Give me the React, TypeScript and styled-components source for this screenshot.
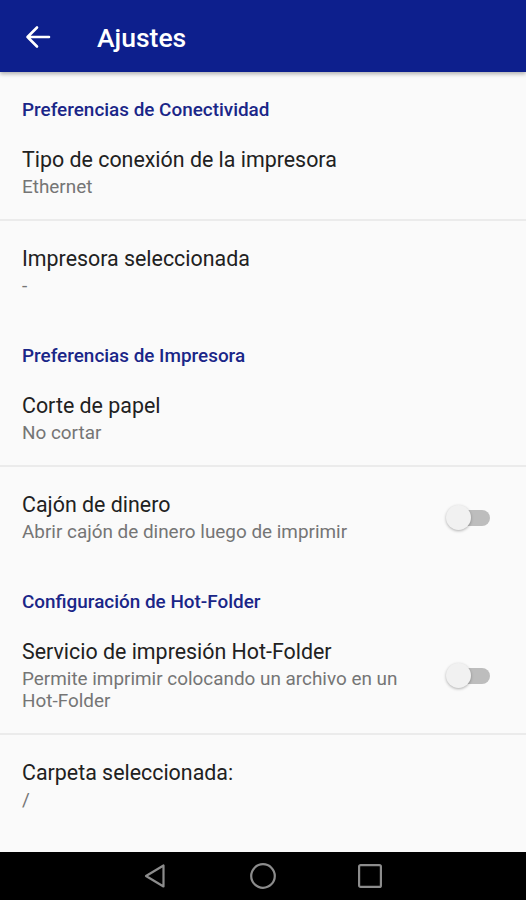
import React from 'react'
import styled, { createGlobalStyle } from 'styled-components'

const GlobalStyle = createGlobalStyle`
  html, body {
    margin: 0;
    padding: 0;
    background: #fafafa;
    font-family: Roboto, "Noto Sans", sans-serif;
  }
`

type Pref = {
  title: string
  summary?: string
  toggle?: boolean
  divider?: boolean
}

type Section = {
  header: string
  items: Pref[]
}

const sections: Section[] = [
  {
    header: 'Preferencias de Conectividad',
    items: [
      { title: 'Tipo de conexión de la impresora', summary: 'Ethernet', divider: true },
      { title: 'Impresora seleccionada', summary: '-' },
    ],
  },
  {
    header: 'Preferencias de Impresora',
    items: [
      { title: 'Corte de papel', summary: 'No cortar', divider: true },
      { title: 'Cajón de dinero', summary: 'Abrir cajón de dinero luego de imprimir', toggle: true },
    ],
  },
  {
    header: 'Configuración de Hot-Folder',
    items: [
      {
        title: 'Servicio de impresión Hot-Folder',
        summary: 'Permite imprimir colocando un archivo en un Hot-Folder',
        toggle: true,
        divider: true,
      },
      { title: 'Carpeta seleccionada:', summary: '/' },
    ],
  },
]

const App: React.FC = () => {
  return (
    <>
      <GlobalStyle />
      <Screen>
        <AppBar>
          <BackButton>
            <svg width="28" height="28" viewBox="0 0 28 28" fill="none">
              <path
                d="M25 14H3.5M13 4.5L3.5 14L13 23.5"
                stroke="#fff"
                strokeWidth="2.6"
                strokeLinecap="round"
                strokeLinejoin="round"
              />
            </svg>
          </BackButton>
          <Title>Ajustes</Title>
        </AppBar>
        <Content>
          {sections.map((section) => (
            <div key={section.header}>
              <CategoryHeader>{section.header}</CategoryHeader>
              {section.items.map((item) => (
                <React.Fragment key={item.title}>
                  <Item>
                    <ItemText>
                      <ItemTitle>{item.title}</ItemTitle>
                      {item.summary && <ItemSummary>{item.summary}</ItemSummary>}
                    </ItemText>
                    {item.toggle && (
                      <Switch>
                        <Track />
                        <Thumb />
                      </Switch>
                    )}
                  </Item>
                  {item.divider && <Divider />}
                </React.Fragment>
              ))}
            </div>
          ))}
        </Content>
        <NavBar>
          <svg width="26" height="28" viewBox="0 0 26 28" fill="none">
            <path
              d="M20.5 3.5V24.5L3 14Z"
              stroke="#8c8c8c"
              strokeWidth="2.2"
              strokeLinejoin="round"
            />
          </svg>
          <svg width="28" height="28" viewBox="0 0 28 28" fill="none">
            <circle cx="14" cy="14" r="11.8" stroke="#8c8c8c" strokeWidth="2.2" />
          </svg>
          <svg width="26" height="26" viewBox="0 0 26 26" fill="none">
            <rect x="2.1" y="2.1" width="21.8" height="21.8" rx="1.5" stroke="#8c8c8c" strokeWidth="2.2" />
          </svg>
        </NavBar>
      </Screen>
    </>
  )
}

const Screen = styled.div`
  height: 100vh;
  display: flex;
  flex-direction: column;
  background: #fafafa;
  overflow: hidden;
`

const AppBar = styled.header`
  box-sizing: border-box;
  height: 72px;
  padding-top: 2px;
  flex-shrink: 0;
  display: flex;
  align-items: center;
  background: #0d1f8d;
  box-shadow: 0 2px 4px rgba(0, 0, 0, 0.3);
  position: relative;
  z-index: 1;
`

const BackButton = styled.div`
  width: 28px;
  height: 28px;
  margin-left: 24px;
  display: flex;
`

const Title = styled.h1`
  margin: 0 0 0 45px;
  color: #fff;
  font-size: 26.5px;
  font-weight: 500;
`

const Content = styled.main`
  flex: 1;
`

const CategoryHeader = styled.div`
  padding: 27px 22px 1px;
  line-height: 22px;
  font-size: 18.9px;
  font-weight: 500;
  color: #1a2688;
`

const Item = styled.div`
  display: flex;
  align-items: center;
  padding: 25px 36px 21px 22px;
`

const ItemText = styled.div`
  flex: 1;
  display: flex;
  flex-direction: column;
  gap: 3px;
`

const ItemTitle = styled.div`
  font-size: 21.4px;
  line-height: 26px;
  color: #212121;
`

const ItemSummary = styled.div`
  font-size: 18.9px;
  line-height: 22px;
  color: #757575;
`

const Divider = styled.div`
  height: 2px;
  background: #ebebeb;
`

const Switch = styled.div`
  position: relative;
  width: 44px;
  height: 26px;
  margin-left: 20px;
  flex-shrink: 0;
`

const Track = styled.div`
  position: absolute;
  right: 0;
  top: 5px;
  width: 34px;
  height: 16px;
  border-radius: 8px;
  background: #bdbdbd;
`

const Thumb = styled.div`
  position: absolute;
  left: 0;
  top: 0;
  width: 25px;
  height: 25px;
  border-radius: 50%;
  background: #f1f1f1;
  box-shadow: 0 1px 3px rgba(0, 0, 0, 0.3);
`

const NavBar = styled.nav`
  height: 48px;
  flex-shrink: 0;
  background: #000;
  display: flex;
  align-items: center;
  justify-content: center;
  gap: 80px;
`

export default App
